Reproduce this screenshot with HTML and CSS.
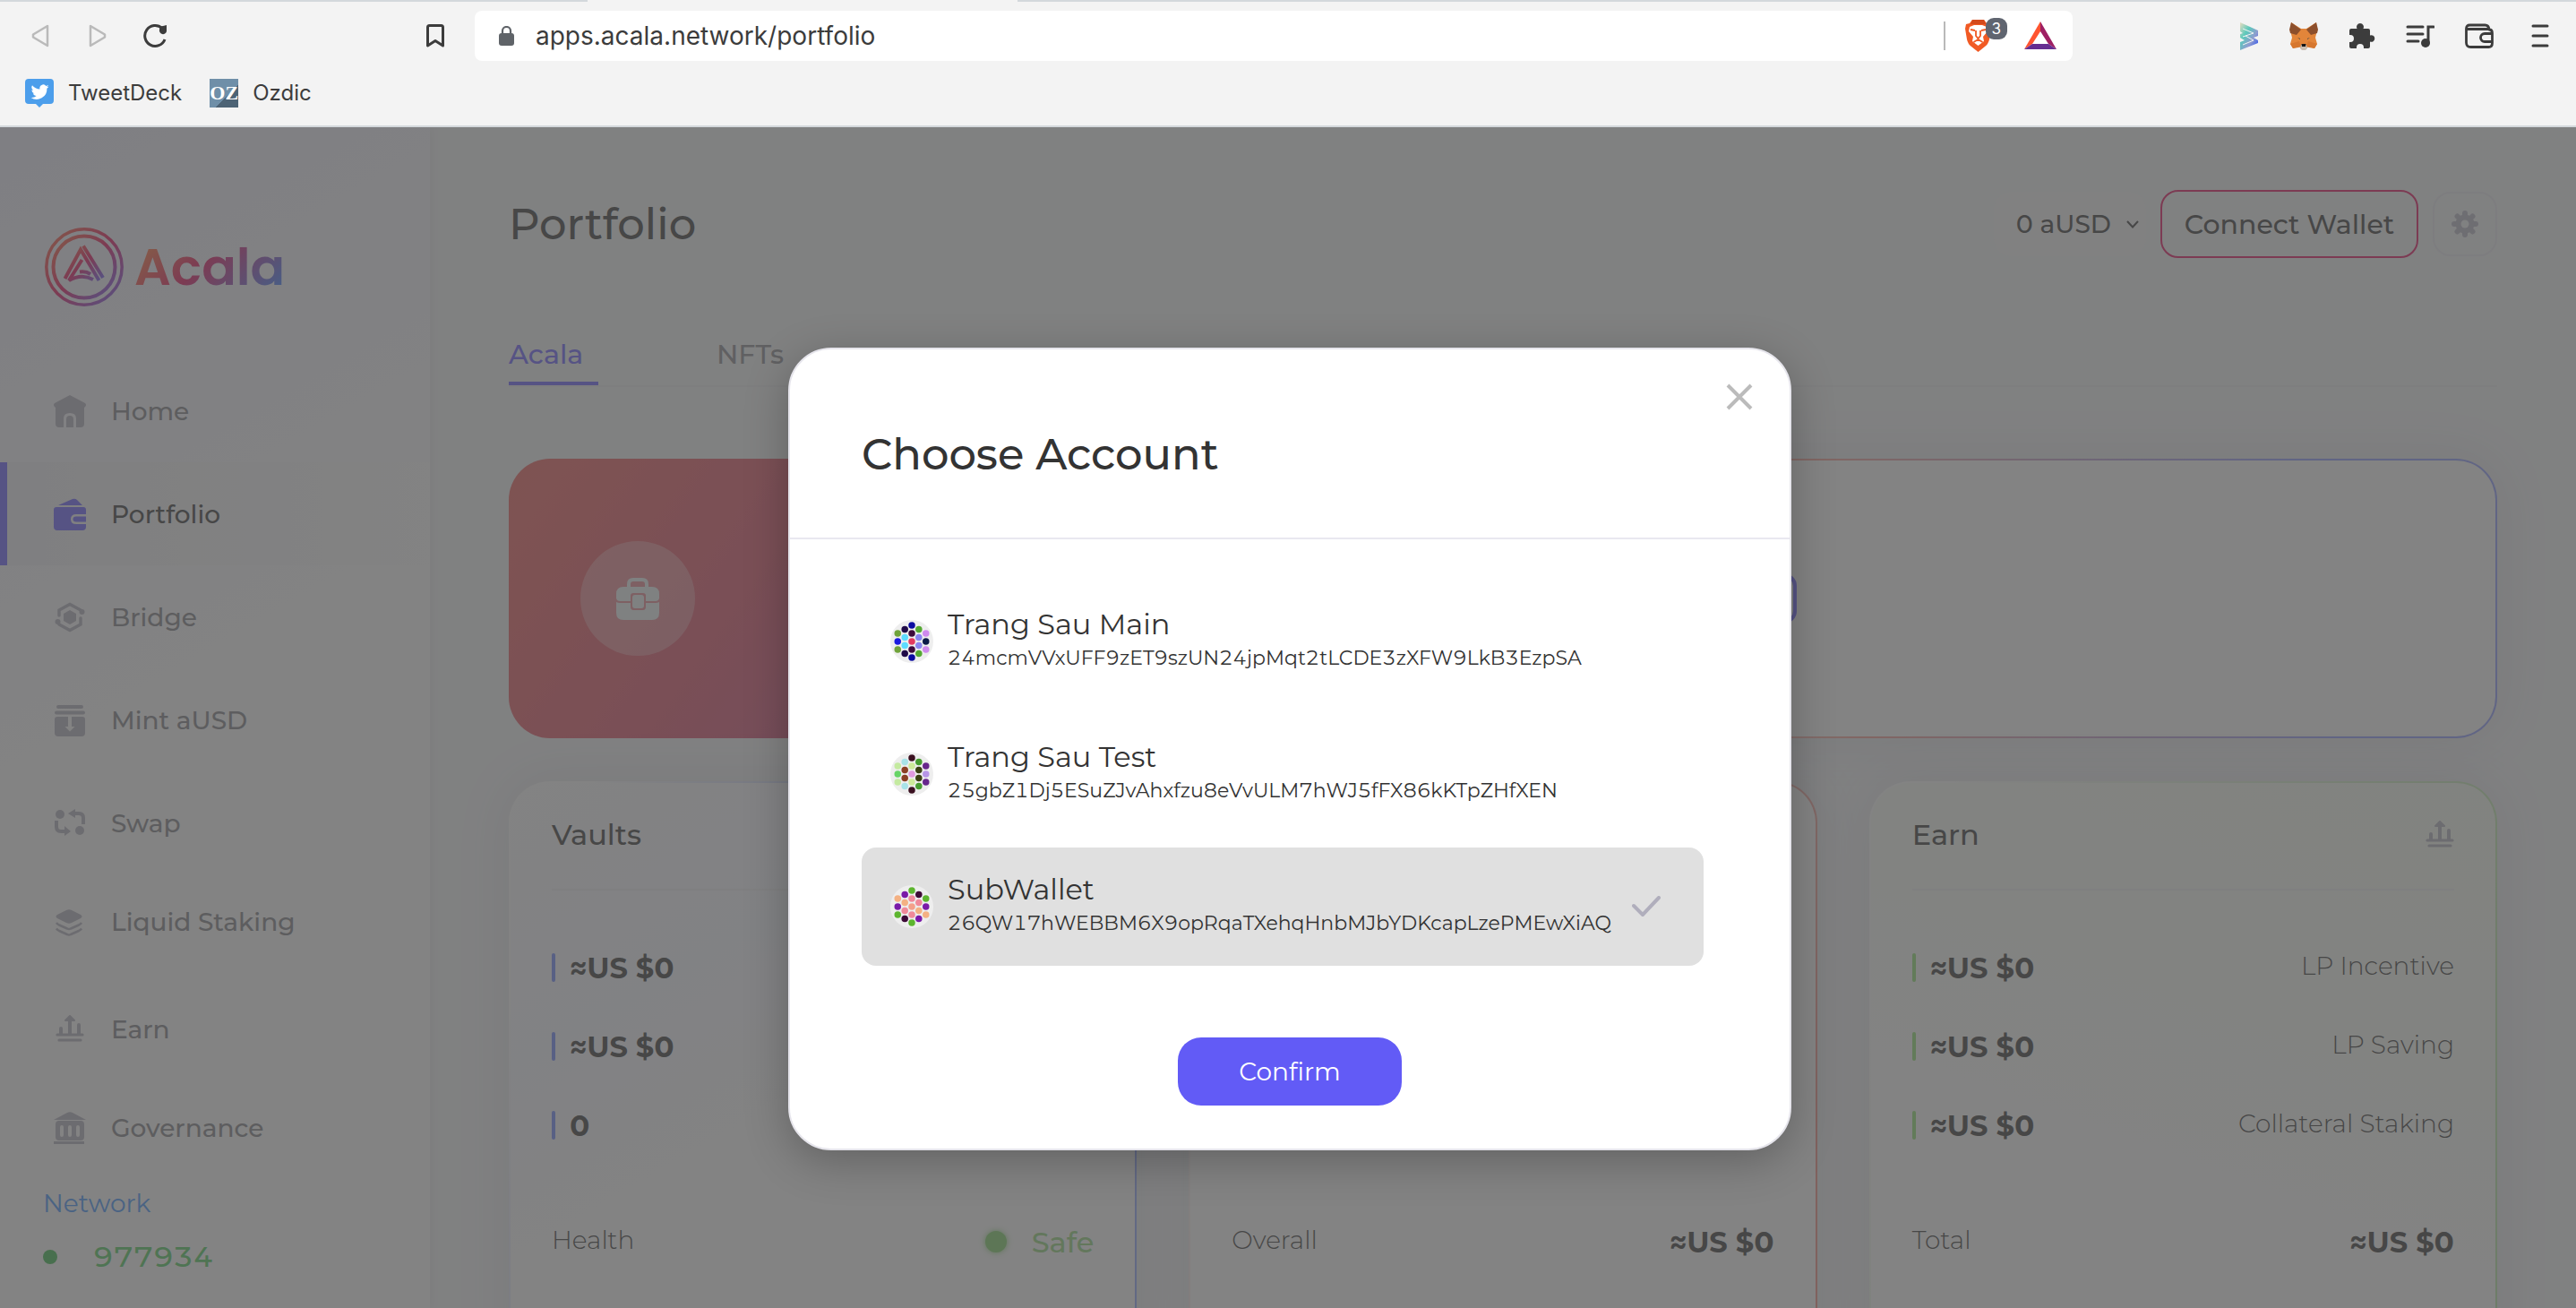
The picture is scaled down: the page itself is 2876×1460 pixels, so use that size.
FILE: index.html
```html
<!DOCTYPE html>
<html lang="en">
<head>
<meta charset="utf-8">
<title>Acala – Portfolio</title>
<link rel="stylesheet" href="styles.css">
</head>
<body>
<svg width="0" height="0" class="defs" aria-hidden="true">
  <defs>
    <linearGradient id="brand" x1="0" y1="0" x2="1" y2="1">
      <stop offset="0" stop-color="#ff6c3b"/><stop offset=".5" stop-color="#e40c5b"/><stop offset="1" stop-color="#645aff"/>
    </linearGradient>
    <linearGradient id="sub" x1="0" y1="0" x2="1" y2="1">
      <stop offset="0" stop-color="#e8dcc0"/><stop offset=".35" stop-color="#5cc9bb"/><stop offset=".65" stop-color="#8f9ccf"/><stop offset="1" stop-color="#1f48f5"/>
    </linearGradient>
    <symbol id="i-earn" viewBox="0 0 32 32">
      <path d="M2 22h28M4 28h24" fill="none" stroke="currentColor" stroke-width="3.200" stroke-linecap="round"/>
      <path d="M6 21v-6M26 21V11M16 21V6" fill="none" stroke="currentColor" stroke-width="4" stroke-linecap="round"/>
      <path d="M16 1l5 5H11z" fill="currentColor" stroke="currentColor" stroke-width="2" stroke-linejoin="round"/>
    </symbol>
  </defs>
</svg>

<header class="chrome">
  <div class="tab-edge"><span class="edge-left"></span><span class="edge-right"></span></div>
  <div class="toolbar">
    <button class="tool back" aria-label="Back"><svg width="20" height="26" viewBox="0 0 20 26"><path d="M18 2v22L2 14.500V11.500z" fill="none" stroke="#bababa" stroke-width="2.500" stroke-linejoin="round"/></svg></button>
    <button class="tool forward" aria-label="Forward"><svg width="20" height="26" viewBox="0 0 20 26"><path d="M2 2v22l16-9.500V11.500z" fill="none" stroke="#bababa" stroke-width="2.500" stroke-linejoin="round"/></svg></button>
    <button class="tool reload" aria-label="Reload"><svg width="28" height="28" viewBox="0 0 28 28"><path d="M25 18A11.500 11.500 0 1 1 22 5.500" fill="none" stroke="#3c3c3c" stroke-width="3"/><path d="M19 7a4 4 0 0 1 4-4l4-1v7a4 4 0 0 1-8-2z" fill="#3c3c3c"/></svg></button>
    <button class="tool bookmark" aria-label="Bookmark this page"><svg width="20" height="26" viewBox="0 0 20 26"><path d="M1.500 24V3.500q0-2 2-2h13q2 0 2 2V24L10 18.500z" fill="none" stroke="#3c3c3c" stroke-width="3" stroke-linejoin="round"/></svg></button>
    <div class="address-bar">
      <svg width="17" height="22" viewBox="0 0 17 22"><rect y="8" width="17" height="14" rx="3" fill="#5f6368"/><path d="M4 9V5.500a4.500 4.500 0 0 1 9 0V9" fill="none" stroke="#5f6368" stroke-width="2.200"/></svg>
      <input class="url" type="text" aria-label="Address" value="apps.acala.network/portfolio">
      <span class="url-divider"></span>
      <button class="tool shield" aria-label="Shields: 3 blocked">
        <svg width="29" height="36" viewBox="0 0 29 36"><path d="M8 0h13l3 4 4 1 1 5-2 12q-1 5-5 8l-7.500 6L7 30q-4-3-5-8L0 10l1-5 4-1z" fill="#f15a24"/><path d="M8 0h13l2 5H6z" fill="#d44a1c"/><path d="M5 8l5-2h9l5 2 1 5-5 6 1 5-6.500 5L8 24l1-5-5-6z" fill="#fff"/><path d="M6 11l5 1M23 11l-5 1M12 12v6l2.500 3 2.500-3v-6M9.500 25l5-3 5 3" fill="none" stroke="#f15a24" stroke-width="1.800"/></svg>
        <span class="count">3</span>
      </button>
      <button class="tool" aria-label="Rewards"><svg width="36" height="32" viewBox="0 0 36 32"><path d="M18 0L0 31l9-6 9-14z" fill="#ff5430"/><path d="M18 0l18 31-9-6-9-14z" fill="#9e1f63"/><path d="M0 31h36l-9-6H9z" fill="#662d91"/></svg></button>
    </div>
    <div class="extensions">
      <button class="tool" aria-label="SubWallet"><svg width="22" height="32" viewBox="0 0 22 32"><path d="M1 1l20 9v6l-5 2 5 3v3L1 32V23l5-2-5-3v-4l3-1-3-2z" fill="url(#sub)"/><path d="M4 8l12 5-12 4M4 26l12-5-9-5" fill="none" stroke="#f2f2f2" stroke-width="1"/></svg></button>
      <button class="tool" aria-label="MetaMask"><svg width="32" height="32" viewBox="0 0 32 32"><path d="M2 1l11 7h6l11-7 1 9-2 8 2 7-3 5-7-2-3 3h-4l-3-3-7 2-3-5 2-7-2-8z" fill="#e2853a"/><path d="M2 1l11 8-5 6-7-2-1-4zM30 1L19 9l5 6 7-2 1-4z" fill="#8c4f2c"/><path d="M1 25l10-3 2 6-3 1-6 1zM31 25l-10-3-2 6 3 1 6 1z" fill="#d6772f"/><path d="M13 26h6l1 4-2 2h-4l-2-2z" fill="#c9bdb0"/><path d="M13.500 25h5l-.5 3h-4z" fill="#161616"/><path d="M9 18l3 1v1zM23 18l-3 1v1z" fill="#31404a"/></svg></button>
      <button class="tool" aria-label="Extensions"><svg width="30" height="30" viewBox="0 0 30 30"><path d="M3 7h6.500a4 4 0 1 1 7 0H22a2 2 0 0 1 2 2v5.500a3.800 3.800 0 1 1 0 7V27a2 2 0 0 1-2 2h-5v-1a4 4 0 0 0-8 0v1H3a2 2 0 0 1-2-2v-5h1a4 4 0 0 0 0-8H1V9a2 2 0 0 1 2-2z" fill="#3c3c3c"/></svg></button>
      <button class="tool" aria-label="Media"><svg width="32" height="28" viewBox="0 0 32 28"><path d="M2 4h17M2 12h17M2 20h12" stroke="#3c3c3c" stroke-width="3" stroke-linecap="round"/><path d="M25 22V4h6" fill="none" stroke="#3c3c3c" stroke-width="3" stroke-linecap="round"/><circle cx="22" cy="22" r="5" fill="#3c3c3c"/></svg></button>
      <button class="tool" aria-label="Wallet"><svg width="32" height="28" viewBox="0 0 32 28"><path d="M27 7q3.500 0 3.500 4v11q0 4.500-4 4.500h-20q-5 0-5-5V6q0-4 4-4h17q4 0 4.500 5zM2 6.500h25M31 11.500H22a4.500 4.500 0 0 0 0 9h9" fill="none" stroke="#3c3c3c" stroke-width="2.800" stroke-linejoin="round"/></svg></button>
      <button class="tool more" aria-label="Menu"><svg width="20" height="26" viewBox="0 0 20 26"><path d="M2 2h16M2 13h16M2 24h16" stroke="#3c3c3c" stroke-width="3" stroke-linecap="round"/></svg></button>
    </div>
  </div>
  <nav class="bookmarks">
    <a href="#"><svg width="32" height="32" viewBox="0 0 32 32"><path d="M4 0h24q4 0 4 4v20q0 4-4 4h-8l-4 4-4-4H4q-4 0-4-4V4q0-4 4-4z" fill="#4c9eeb"/><path d="M26.500 8.500a8 8 0 0 1-2.300.6 4 4 0 0 0 1.800-2.200 8 8 0 0 1-2.600 1 4 4 0 0 0-6.900 3.700A11.500 11.500 0 0 1 8 7.300a4 4 0 0 0 1.300 5.400 4 4 0 0 1-1.800-.5 4 4 0 0 0 3.200 4 4 4 0 0 1-1.800.1 4 4 0 0 0 3.800 2.800A8.200 8.200 0 0 1 6.500 21a11.600 11.600 0 0 0 17.900-10.300 8 8 0 0 0 2.100-2.200z" fill="#fff"/></svg>TweetDeck</a>
    <a href="#"><span class="oz">OZ</span>Ozdic</a>
  </nav>
</header>

<div class="app">
  <aside class="sidebar">
    <a class="brand" href="#">
      <svg width="88" height="88" viewBox="0 0 88 88" fill="none" stroke="url(#brand)"><circle cx="44" cy="44" r="42.200" stroke-width="3.500"/><circle cx="44" cy="44" r="34.500" stroke-width="4"/><path d="M22.500 57L40 24.500 60.500 59M43 20.500L65 56M41.500 36L27 59q14-8 27-1M39 49.500q7-1 12 2.500" stroke-width="4"/></svg>
      <span class="brand-name">Acala</span>
    </a>
    <nav class="menu">
      <a class="item" href="#"><svg width="36" height="36" viewBox="0 0 36 36"><path fill-rule="evenodd" d="M18 0l17 9q2 2 0 4l-1 1v18q0 4-4 4h-5V26q0-6-7-6t-7 6v10H6q-4 0-4-4V14l-1-1q-2-2 0-4z" fill="currentColor"/><path d="M14 36V27q0-4 4-4t4 4v9z" fill="currentColor"/></svg>Home</a>
      <a class="item active" href="#"><svg width="36" height="36" viewBox="0 0 36 36"><path d="M5 8l16-7q3-1 5 1l6 6zM3 10h30q3 0 3 3v5H25q-6 0-6 5.500T25 29h11v3q0 4-4 4H4q-4 0-4-4V13q0-3 3-3z" fill="currentColor"/><path d="M36 20.500V26.500H25q-3.500 0-3.500-3t3.500-3z" fill="currentColor"/></svg>Portfolio</a>
      <a class="item" href="#"><svg width="36" height="36" viewBox="0 0 36 36"><path d="M6 16V10L18 3.500l12 6.500M30 19v7L18 32.500 6 26" fill="none" stroke="currentColor" stroke-width="3.500" stroke-linecap="round"/><circle cx="31.500" cy="12" r="3" fill="currentColor"/><circle cx="4.500" cy="23" r="3" fill="currentColor"/><path d="M18 10l7 4v8l-7 4-7-4v-8z" fill="currentColor"/></svg>Bridge</a>
      <a class="item" href="#"><svg width="36" height="36" viewBox="0 0 36 36"><path d="M5 3h26M3 9.500h30" stroke="currentColor" stroke-width="4" stroke-linecap="round"/><path d="M4 14h12v11h-3.500l5.500 5.500 5.500-5.500H20V14h12q3 0 3 3v15q0 4-4 4H5q-4 0-4-4V17q0-3 3-3z" fill="currentColor"/></svg>Mint aUSD</a>
      <a class="item" href="#"><svg width="36" height="36" viewBox="0 0 36 36"><circle cx="7" cy="8" r="5" fill="currentColor"/><circle cx="29" cy="26" r="5" fill="currentColor"/><path d="M3 15v7q0 5 5 5h4M33 19v-7q0-5-5-5h-4" fill="none" stroke="currentColor" stroke-width="4"/><path d="M12 21l7 6-7 5zM24 2l-8 5 8 5z" fill="currentColor"/></svg>Swap</a>
      <a class="item compact" href="#"><svg width="36" height="36" viewBox="0 0 36 36"><path d="M14 5q3-1.500 6 0l10 5q3 2 0 4l-10 5q-3 1.500-6 0L4 14q-3-2 0-4z" fill="currentColor"/><path d="M3 19q1 1.500 3 2.500l9 4q2 1 4 0l9-4q2-1 3-2.500M3 25.500q1 1.500 3 2.500l9 4q2 1 4 0l9-4q2-1 3-2.500" fill="none" stroke="currentColor" stroke-width="2.500"/></svg>Liquid Staking</a>
      <a class="item" href="#"><svg width="36" height="32"><use href="#i-earn"/></svg>Earn</a>
      <a class="item compact" href="#"><svg width="36" height="36" viewBox="0 0 36 36"><path d="M0 9L15 1q3-1.500 6 0l15 8zM0 33h34v3H0z" fill="currentColor"/><path fill-rule="evenodd" d="M6 10h24q4 0 4 4v14q0 4-4 4H6q-4 0-4-4V14q0-4 4-4zm3 5q-2 0-2 2v9q0 2 2 2t2-2v-9q0-2-2-2zm9 0q-2 0-2 2v9q0 2 2 2t2-2v-9q0-2-2-2zm9 0q-2 0-2 2v9q0 2 2 2t2-2v-9q0-2-2-2z" fill="currentColor"/></svg>Governance</a>
    </nav>
    <div class="network">
      <div class="network-title">Network</div>
      <div class="block"><span class="block-dot"></span>977934</div>
    </div>
  </aside>

  <main class="main">
    <header class="page-head">
      <h1>Portfolio</h1>
      <div class="actions">
        <button class="balance">0 aUSD<svg width="14" height="9" viewBox="0 0 14 9"><path d="M1 1l6 6.500L13 1" fill="none" stroke="currentColor" stroke-width="2"/></svg></button>
        <button class="connect">Connect Wallet</button>
        <button class="settings" aria-label="Settings"><svg width="32" height="32" viewBox="0 0 32 32"><g stroke="currentColor" stroke-width="6" stroke-linecap="round"><path d="M16 4v24M4 16h24M7.500 7.500l17 17M24.500 7.500l-17 17"/></g><circle cx="16" cy="16" r="10.500" fill="currentColor"/><circle class="hole" cx="16" cy="16" r="4.500"/></svg></button>
      </div>
    </header>
    <nav class="tabs"><a class="tab current" href="#">Acala</a><a class="tab" href="#">NFTs</a></nav>

    <section class="banner">
      <div class="assets">
        <span class="badge"><svg width="48" height="48" viewBox="0 0 48 48"><path d="M14 12V8q0-5 5-5h10q5 0 5 5v4" fill="none" stroke="currentColor" stroke-width="4"/><path d="M8 11h32q8 0 8 8v5q-1 3-4 3H33v-6q0-3-3-3H19q-3 0-3 3v6H4q-3 0-4-3v-5q0-8 8-8zM0 28q2 1 4 1h12v4q0 4 3 4h11q3 0 3-4v-4h11q2 0 4-1v12q0 8-8 8H8q-8 0-8-8z" fill="currentColor"/><rect x="18" y="20" width="13" height="15" rx="3" fill="currentColor"/></svg></span>
      </div>
      <div class="connect-card"><div class="connect-slot"></div></div>
    </section>

    <section class="cards">
      <article class="card vaults">
        <h2>Vaults</h2>
        <ul>
          <li><strong>≈US $0</strong></li>
          <li><strong>≈US $0</strong></li>
          <li><strong>0</strong></li>
        </ul>
        <div class="total"><span class="label">Health</span><span class="safe"><i class="safe-dot"></i>Safe</span></div>
      </article>
      <article class="card pool">
        <h2></h2>
        <ul><li></li><li></li><li></li></ul>
        <div class="total"><span class="label">Overall</span><strong>≈US $0</strong></div>
      </article>
      <article class="card earn">
        <h2>Earn<svg width="32" height="32"><use href="#i-earn"/></svg></h2>
        <ul>
          <li><strong>≈US $0</strong><span class="label">LP Incentive</span></li>
          <li><strong>≈US $0</strong><span class="label">LP Saving</span></li>
          <li><strong>≈US $0</strong><span class="label">Collateral Staking</span></li>
        </ul>
        <div class="total"><span class="label">Total</span><strong>≈US $0</strong></div>
      </article>
    </section>
  </main>

  <div class="overlay">
    <form class="modal" role="dialog" aria-labelledby="modal-title">
      <div class="modal-head">
        <h2 id="modal-title">Choose Account</h2>
        <button class="close" type="button" aria-label="Close"><svg width="30" height="30" viewBox="0 0 30 30"><path d="M2 2l26 26M28 2L2 28" stroke="#bbb" stroke-width="4"/></svg></button>
      </div>
      <div class="accounts">
        <label class="account">
          <input type="radio" name="account">
          <svg width="48" height="48" viewBox="0 0 64 64"><circle cx="32" cy="32" r="32" fill="#eee"/><g fill="#70a33a"><circle cx="11" cy="20" r="5"/><circle cx="11" cy="44" r="5"/></g><circle cx="11" cy="32" r="5" fill="#1a1ae0"/><g fill="#1f0a48"><circle cx="21.600" cy="14" r="5"/><circle cx="21.600" cy="50" r="5"/></g><g fill="#5ddcff"><circle cx="21.600" cy="26" r="5"/><circle cx="21.600" cy="38" r="5"/></g><g fill="#0a0aa0"><circle cx="32" cy="8" r="5"/><circle cx="32" cy="56" r="5"/></g><g fill="#3d0a3c"><circle cx="32" cy="20" r="5"/><circle cx="32" cy="44" r="5"/></g><circle cx="32" cy="32" r="5" fill="#e33a60"/><g fill="#55a832"><circle cx="42.400" cy="14" r="5"/><circle cx="42.400" cy="50" r="5"/></g><g fill="#8a85f0"><circle cx="42.400" cy="26" r="5"/><circle cx="42.400" cy="38" r="5"/></g><g fill="#cf8aee"><circle cx="53" cy="20" r="5"/><circle cx="53" cy="44" r="5"/></g><circle cx="53" cy="32" r="5" fill="#0a1a48"/></svg>
          <span class="who"><span class="name">Trang Sau Main</span><span class="addr">24mcmVVxUFF9zET9szUN24jpMqt2tLCDE3zXFW9LkB3EzpSA</span></span>
        </label>
        <label class="account">
          <input type="radio" name="account">
          <svg width="48" height="48" viewBox="0 0 64 64"><circle cx="32" cy="32" r="32" fill="#eee"/><g fill="#c4eaa0"><circle cx="11" cy="20" r="5"/><circle cx="11" cy="44" r="5"/></g><circle cx="11" cy="32" r="5" fill="#66d466"/><g fill="#a8e3e8"><circle cx="21.600" cy="14" r="5"/><circle cx="21.600" cy="50" r="5"/></g><g fill="#8b4025"><circle cx="21.600" cy="26" r="5"/><circle cx="21.600" cy="38" r="5"/></g><g fill="#3a1020"><circle cx="32" cy="8" r="5"/><circle cx="32" cy="56" r="5"/></g><g fill="#cdea9a"><circle cx="32" cy="20" r="5"/><circle cx="32" cy="44" r="5"/></g><circle cx="32" cy="32" r="5" fill="#e09ae0"/><g fill="#479c30"><circle cx="42.400" cy="14" r="5"/><circle cx="42.400" cy="50" r="5"/></g><g fill="#3b3f14"><circle cx="42.400" cy="26" r="5"/><circle cx="42.400" cy="38" r="5"/></g><g fill="#67268c"><circle cx="53" cy="20" r="5"/><circle cx="53" cy="44" r="5"/></g><circle cx="53" cy="32" r="5" fill="#b795e6"/></svg>
          <span class="who"><span class="name">Trang Sau Test</span><span class="addr">25gbZ1Dj5ESuZJvAhxfzu8eVvULM7hWJ5fFX86kKTpZHfXEN</span></span>
        </label>
        <label class="account">
          <input type="radio" name="account" checked>
          <svg width="48" height="48" viewBox="0 0 64 64"><circle cx="32" cy="32" r="32" fill="#eee"/><g fill="#f4b183"><circle cx="11" cy="20" r="5"/><circle cx="21.600" cy="26" r="5"/><circle cx="42.400" cy="38" r="5"/><circle cx="53" cy="44" r="5"/></g><g fill="#7a1aa8"><circle cx="11" cy="32" r="5"/><circle cx="21.600" cy="14" r="5"/><circle cx="42.400" cy="50" r="5"/><circle cx="53" cy="32" r="5"/></g><g fill="#5db52f"><circle cx="11" cy="44" r="5"/><circle cx="32" cy="8" r="5"/><circle cx="32" cy="56" r="5"/><circle cx="53" cy="20" r="5"/></g><g fill="#f08a9a"><circle cx="21.600" cy="38" r="5"/><circle cx="32" cy="20" r="5"/><circle cx="32" cy="44" r="5"/><circle cx="42.400" cy="26" r="5"/></g><g fill="#3d0a36"><circle cx="21.600" cy="50" r="5"/><circle cx="42.400" cy="14" r="5"/></g><circle cx="32" cy="32" r="5" fill="#f4a08a"/></svg>
          <span class="who"><span class="name">SubWallet</span><span class="addr">26QW17hWEBBM6X9opRqaTXehqHnbMJbYDKcapLzePMEwXiAQ</span></span>
          <svg class="tick" width="32" height="24" viewBox="0 0 32 24"><path d="M2 11l10 10L30 2" fill="none" stroke="#b0aebc" stroke-width="4" stroke-linecap="round" stroke-linejoin="round"/></svg>
        </label>
      </div>
      <button class="confirm" type="button">Confirm</button>
    </form>
  </div>
</div>
</body>
</html>
```
FILE: styles.css
```css
* { box-sizing: border-box; }
body {
  margin: 0;
  height: 100vh;
  display: flex;
  flex-direction: column;
  overflow: hidden;
  font-family: Montserrat, Inter, "Liberation Sans", sans-serif;
  font-variant-numeric: tabular-nums;
  color: #333;
}
h1, h2, ul { margin: 0; padding: 0; font-weight: 500; list-style: none; }
a { color: inherit; text-decoration: none; }
button { margin: 0; padding: 0; border: 0; background: none; font: inherit; color: inherit; }
svg { display: block; flex: none; }
.defs { position: absolute; }

/* browser chrome */
.chrome {
  flex: none;
  background: #f3f3f3;
  border-bottom: 2px solid #d3d8dc;
  padding-bottom: 10px;
  font-family: Inter, "Liberation Sans", sans-serif;
  color: #3c3c3c;
}
.tab-edge { display: flex; gap: 480px; height: 2px; }
.edge-left { width: 656px; background: #d3d8dc; }
.edge-right { flex: 1; background: #d3d8dc; }
.toolbar { display: flex; align-items: center; height: 76px; padding: 0 30px 0 35px; }
.tool { display: flex; align-items: center; justify-content: center; position: relative; }
.forward { margin-left: 44px; }
.reload { margin-left: 40px; }
.bookmark { margin: 0 34px 0 289px; }
.address-bar {
  flex: 1;
  display: flex;
  align-items: center;
  height: 56px;
  padding: 0 18px 0 27px;
  border-radius: 8px;
  background: #fff;
}
.url { flex: 1; margin-left: 24px; padding: 0; border: 0; outline: 0; background: none; font: 28px/40px Inter, sans-serif; color: #3c3c3c; }
.url-divider { width: 2px; height: 32px; margin-right: 22px; background: #b9b9b9; }
.shield { margin-right: 37px; }
.count {
  position: absolute;
  left: 23px;
  top: -2px;
  width: 24px;
  height: 24px;
  border-radius: 9px;
  background: #606570;
  color: #fff;
  font-size: 17px;
  line-height: 24px;
  text-align: center;
}
.extensions { display: flex; align-items: center; gap: 34px; margin-left: 186px; }
.more { margin-left: 8px; }
.bookmarks { display: flex; align-items: center; gap: 31px; height: 52px; padding-left: 28px; font-size: 24px; line-height: 32px; }
.bookmarks a { display: flex; align-items: center; gap: 16px; }
.oz {
  width: 32px;
  height: 32px;
  background: linear-gradient(135deg, #6f8fa8 60%, #4d6375 60%);
  color: #fff;
  font: 700 22px/32px "Liberation Serif", serif;
  text-align: center;
}

/* app shell */
.app { flex: 1; min-height: 0; position: relative; display: grid; grid-template-columns: 480px 1fr; overflow: hidden; background: #f2f3f5; }
.sidebar {
  background: linear-gradient(150deg, #eeeefb 0, #fafafa 45%, #fafafa 100%);
  box-shadow: 2px 0 10px rgba(0, 0, 0, .05);
}
.brand { display: flex; align-items: center; gap: 12px; height: 88px; margin: 112px 0 59px 50px; }
.brand-name {
  font: 600 57px/88px Poppins, Montserrat, sans-serif;
  color: transparent;
  background: linear-gradient(135deg, #ff6c3b 15%, #e40c5b 45%, #3a7bff 90%);
  -webkit-background-clip: text;
  background-clip: text;
}
.item {
  display: flex;
  align-items: center;
  gap: 28px;
  height: 115px;
  padding-left: 60px;
  font-size: 28px;
  font-weight: 500;
  line-height: 36px;
  color: #7e7e83;
}
.item svg { color: #b0aebc; }
.item.compact { height: 105px; }
.compact + .item { margin-top: 10px; }
.item.active { padding-left: 52px; border-left: 8px solid #645aff; background: linear-gradient(90deg, #eeeef3, #fafafa); color: #333; }
.item.active svg { color: #645aff; }
.network { padding: 6px 0 0 48px; }
.network-title { font-size: 28px; line-height: 52px; color: #3c90fa; }
.block { display: flex; align-items: center; gap: 40px; font-size: 32px; font-weight: 500; line-height: 68px; color: #4dc85d; }
.block-dot { width: 16px; height: 16px; border-radius: 50%; background: #38b84a; }

/* page */
.main { padding: 70px 88px 0; overflow: hidden; }
.page-head { display: flex; justify-content: space-between; align-items: center; height: 76px; }
h1 { font-size: 48px; line-height: 60px; }
.actions { display: flex; align-items: center; gap: 16px; font-weight: 500; }
.balance { display: flex; align-items: center; gap: 17px; height: 72px; padding: 0 8px 0 24px; border-radius: 20px; background: #f3f3f5; font-size: 28px; }
.connect { width: 288px; height: 76px; border: 2px solid #e40c5b; border-radius: 20px; font-size: 30px; }
.settings { display: flex; align-items: center; justify-content: center; width: 72px; height: 72px; border: 2px solid #e8e8ee; border-radius: 20px; color: #b6b4c4; }
.hole { fill: #f2f3f5; }
.tabs { display: flex; gap: 132px; height: 72px; margin-top: 72px; border-bottom: 2px solid #e9e9ee; }
.tab { height: 70px; font-size: 30px; font-weight: 500; line-height: 72px; color: #85858c; }
.tab.current { width: 100px; border-bottom: 4px solid #645aff; color: #645aff; }

.banner, .cards { display: grid; grid-template-columns: repeat(3, 1fr); gap: 58px; }
.banner { margin-top: 80px; }
.assets {
  display: flex;
  align-items: center;
  height: 312px;
  padding-left: 80px;
  border-radius: 46px;
  background: linear-gradient(125deg, #ed5d58, #dc4d66 40%, #b03f8e);
}
.badge { display: flex; align-items: center; justify-content: center; width: 128px; height: 128px; border-radius: 50%; background: rgba(255, 255, 255, .3); color: #eef4f5; }
.connect-card, .card { border: 2px solid transparent; border-radius: 46px; box-shadow: 0 0 60px rgba(70, 70, 110, .12); }
.connect-card {
  grid-column: span 2;
  display: flex;
  align-items: center;
  background: linear-gradient(#fafafa, #fafafa) padding-box, linear-gradient(80deg, #fafafa 25%, #f59a90 50%, #8a98ff 85%) border-box;
}
.connect-slot { width: 300px; height: 56px; margin-left: 377px; border: 4px solid #645aff; border-radius: 14px; }

.cards { margin-top: 48px; }
.card { padding: 0 46px 100px; --accent: #6b86ff; }
.vaults { background: linear-gradient(150deg, #fafafa, #f6f7ff 30%, #fafafa 50%) padding-box, linear-gradient(110deg, #fafafa 10%, #8ea4ff 70%) border-box; }
.pool { background: linear-gradient(#fafafa, #fafafa) padding-box, linear-gradient(110deg, #fafafa 10%, #f08a80 90%) border-box; }
.earn { --accent: #8cdf6e; background: linear-gradient(200deg, #f6faf0, #f8faf4 30%, #fafafa 60%) padding-box, linear-gradient(110deg, #fafafa 10%, #b4e6a0 90%) border-box; }
.card h2 { display: flex; justify-content: space-between; align-items: center; height: 120px; padding-bottom: 2px; border-bottom: 2px solid #eeeef2; font-size: 32px; line-height: 40px; }
.card h2 svg { color: #b0aebc; }
.card ul { padding-top: 42px; }
.card li { display: flex; align-items: center; height: 88px; }
.card li::before { content: ""; width: 4px; height: 32px; margin-right: 16px; border-radius: 2px; background: var(--accent); }
.card li .label { margin-left: auto; }
.card strong { font-size: 32px; font-weight: 700; }
.label { padding-bottom: 5px; font-size: 28px; font-weight: 300; line-height: 36px; }
.total { display: flex; align-items: center; justify-content: space-between; height: 88px; margin-top: 42px; }
.safe { display: flex; align-items: center; gap: 28px; font-size: 32px; font-weight: 500; color: #8fd47a; }
.safe-dot { width: 24px; height: 24px; border-radius: 50%; background: #7ccf66; box-shadow: 0 0 6px #7ccf66; }

/* account dialog */
.overlay { position: absolute; inset: 0; display: flex; justify-content: center; align-items: flex-start; padding: 246px 0 0 4px; background: rgba(80, 80, 80, .7); }
.modal { width: 1120px; border: 2px solid #e6e5ec; border-radius: 48px; background: #fff; box-shadow: 0 12px 48px rgba(0, 0, 0, .25); }
.modal-head { position: relative; padding: 87px 80px 63px; border-bottom: 2px solid #e9e8f0; }
.modal-head h2 { font-size: 48px; line-height: 60px; }
.close { position: absolute; right: 41px; top: 38px; }
.accounts { display: grid; grid-template-columns: minmax(0, 1fr); gap: 16px; padding: 48px 96px 0 80px; }
.account { position: relative; display: flex; align-items: center; gap: 16px; height: 132px; padding: 0 48px 0 32px; border-radius: 16px; }
.account:has(:checked) { background: #e0e0e0; }
.account input { position: absolute; opacity: 0; margin: 0; }
.who { display: grid; }
.name { font-size: 32px; line-height: 38px; }
.addr { font-size: 22px; line-height: 38px; }
.tick { margin-left: auto; }
.confirm { display: block; width: 250px; height: 76px; margin: 80px auto 48px; border-radius: 26px; background: #625bf6; color: #fff; font-size: 28px; }
```
